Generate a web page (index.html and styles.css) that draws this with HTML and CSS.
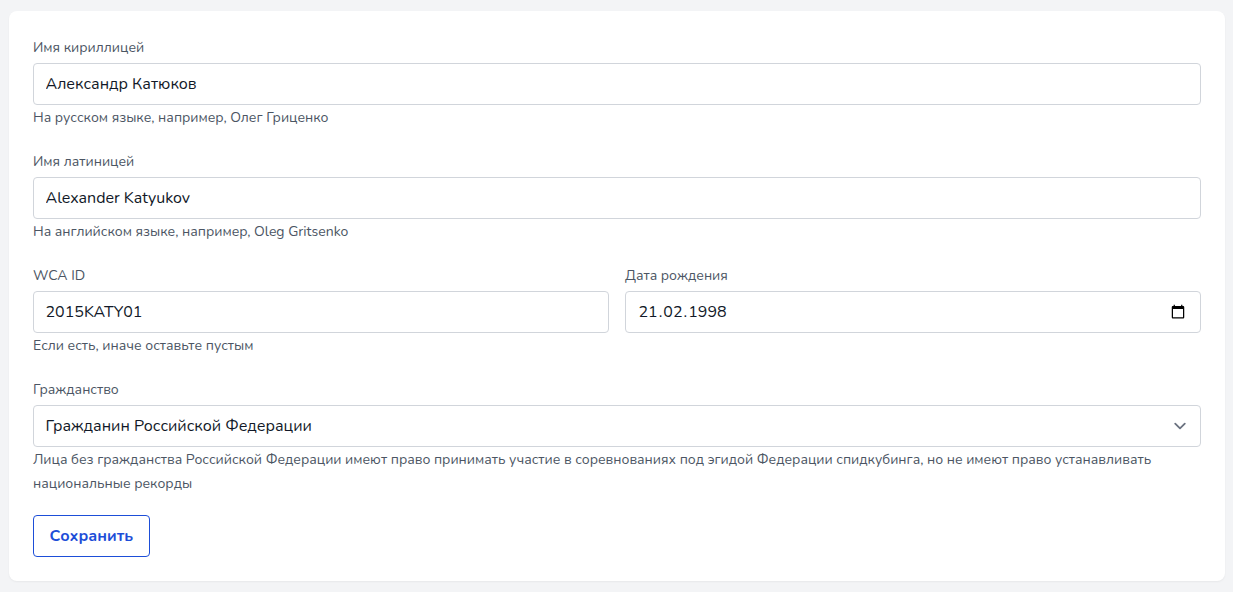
FILE: index.html
```html
<!DOCTYPE html>
<html lang="ru">
<head>
<meta charset="utf-8">
<title>Профиль</title>
<link rel="stylesheet" href="styles.css">
</head>
<body>
<form class="card">
  <div class="field">
    <label class="label" for="ru">Имя кириллицей</label>
    <input class="input" id="ru" type="text" value="Александр Катюков">
    <p class="hint">На русском языке, например, Олег Гриценко</p>
  </div>
  <div class="field">
    <label class="label" for="en">Имя латиницей</label>
    <input class="input" id="en" type="text" value="Alexander Katyukov">
    <p class="hint">На английском языке, например, Oleg Gritsenko</p>
  </div>
  <div class="row">
    <div class="field">
      <label class="label" for="wca">WCA ID</label>
      <input class="input" id="wca" type="text" value="2015KATY01">
      <p class="hint">Если есть, иначе оставьте пустым</p>
    </div>
    <div class="field">
      <label class="label" for="dob">Дата рождения</label>
      <div class="control-wrap">
        <input class="input date" id="dob" type="date" value="1998-02-21">
        <span class="date-text"><span class="date-part">21</span>.<span class="date-part">02</span>.<span class="date-part">1998</span></span>
      </div>
    </div>
  </div>
  <div class="field">
    <label class="label" for="cit">Гражданство</label>
    <div class="control-wrap">
      <select class="input select" id="cit">
        <option>Гражданин Российской Федерации</option>
      </select>
      <svg class="chev" width="24" height="24" viewBox="0 0 20 20"><path fill="none" stroke="#6b7280" stroke-width="1.500" stroke-linecap="round" stroke-linejoin="round" d="M6 8l4 4 4-4"/></svg>
    </div>
    <p class="hint">Лица без гражданства Российской Федерации имеют право принимать участие в соревнованиях под эгидой Федерации спидкубинга, но не имеют право устанавливать национальные рекорды</p>
  </div>
  <button class="save" type="button">Сохранить</button>
</form>
</body>
</html>
```
FILE: styles.css
```css
* { box-sizing: border-box; }
html, body { margin: 0; }
body {
  background: #f3f4f6;
  padding: 11px 8px 11px 9px;
  font-family: "Nunito", "Noto Sans", sans-serif;
  color: #111827;
}
.card {
  background: #fff;
  border-radius: 8px;
  box-shadow: 0 1px 2px rgba(0,0,0,.05);
  padding: 27px 24px 24px;
  display: flex;
  flex-direction: column;
  gap: 22px;
}
.row { display: grid; grid-template-columns: 1fr 1fr; gap: 16px; }
.label { display: block; font-size: 14px; line-height: 20px; color: #4b5563; margin-bottom: 5px; }
.input {
  display: block;
  width: 100%;
  height: 42px;
  border: 1px solid #d1d5db;
  border-radius: 4px;
  padding: 0 12px 0 11.5px;
  font: 16px "Nunito", "Noto Sans", sans-serif;
  color: #111827;
  background: #fff;
}
.date::-webkit-datetime-edit { visibility: hidden; }
.date-text {
  position: absolute;
  left: 12.5px;
  top: 0;
  line-height: 42px;
  font-size: 16px;
  pointer-events: none;
}
.date-part { padding: 0 1px; }
.select { appearance: none; padding-right: 40px; }
.control-wrap { position: relative; }
.chev { position: absolute; right: 9px; top: 9px; pointer-events: none; }
.hint { margin: 0; font-size: 14px; line-height: 24px; color: #4b5563; padding-top: 1px; }
.save {
  align-self: flex-start;
  height: 42px;
  margin-top: -3px;
  padding: 0 16px 0 15.5px;
  background: #fff;
  border: 1px solid #1d4ed8;
  border-radius: 4px;
  color: #1d4ed8;
  font: 700 16px "Nunito", "Noto Sans", sans-serif;
}
```
